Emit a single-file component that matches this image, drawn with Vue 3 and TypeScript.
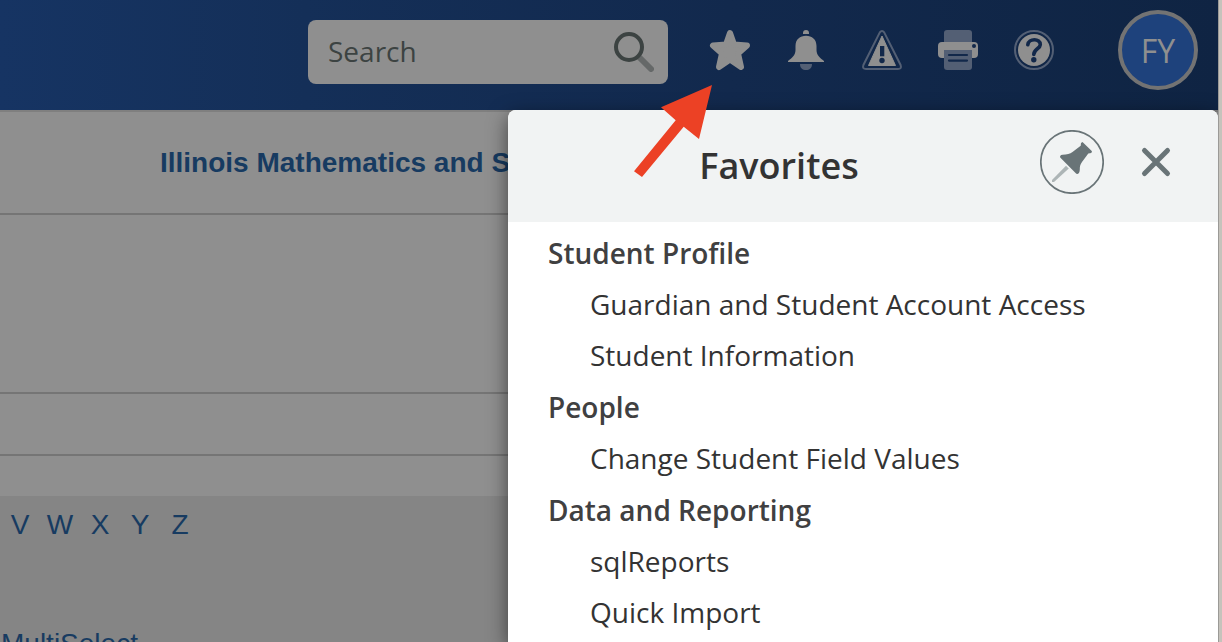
<script setup lang="ts">
import { ref } from 'vue'

interface FavoriteGroup {
  title: string
  links: string[]
}

const query = ref('')
const pinned = ref(false)
const open = ref(true)

const letters: string[] = ['V', 'W', 'X', 'Y', 'Z']

const groups: FavoriteGroup[] = [
  { title: 'Student Profile', links: ['Guardian and Student Account Access', 'Student Information'] },
  { title: 'People', links: ['Change Student Field Values'] },
  { title: 'Data and Reporting', links: ['sqlReports', 'Quick Import'] },
]
</script>

<template>
  <div class="screen">
    <div class="app">
      <header class="topbar">
        <form class="search" role="search" @submit.prevent>
          <input v-model="query" type="text" placeholder="Search" aria-label="Search" />
          <button type="submit" class="bare" aria-label="Run search">
            <svg width="40" height="40" viewBox="0 0 40 40" fill="none">
              <path d="M26 26L37 37" stroke="#656868" stroke-width="6" stroke-linecap="round" />
              <circle cx="15" cy="15" r="13" fill="#8f8f8f" stroke="#3c4342" stroke-width="4" />
            </svg>
          </button>
        </form>
        <nav class="tools" aria-label="Tools">
          <button class="bare" aria-label="Favorites" @click="open = !open">
            <svg width="40" height="40" viewBox="0 0 40 40" class="solid">
              <path d="M20 3L24 14.5L37 15.5L28 23.5L31 37L20 29.5L9 37L12 23.5L3 15.5L16 14.5Z" stroke="#8f8f8f" stroke-width="6" stroke-linejoin="round" />
            </svg>
          </button>
          <button class="bare" aria-label="Notifications">
            <svg width="40" height="40" viewBox="0 0 40 40" class="solid">
              <path d="M17 4V3A3 3 0 0 1 23 3V4Z" />
              <path d="M2 32V31C6 28 9.500 25 9.500 20V16C9.500 9.500 14 5.800 20 5.800S30.500 9.500 30.500 16V20C30.500 25 34 28 38 31V32Z" />
              <path d="M14 34H26C26 38 23.500 40 20 40S14 38 14 34Z" class="soft" />
            </svg>
          </button>
          <button class="bare" aria-label="Alerts">
            <svg width="40" height="40" viewBox="0 0 40 40" class="solid">
              <path d="M17.800 2.400Q20 -0.600 22.200 2.400L38.600 35Q40 39 36 39H4Q0 39 1.400 35Z" fill="none" stroke="#535f74" stroke-width="2" class="line" />
              <path d="M20 6L33.500 35.500H6.500Z" stroke="#8f8f8f" stroke-width="1" stroke-linejoin="round" />
              <path d="M18 16H22.300V26.300H18Z" class="cut" />
              <circle cx="20" cy="30.500" r="2.700" class="cut" />
            </svg>
          </button>
          <button class="bare" aria-label="Print">
            <svg width="40" height="40" viewBox="0 0 40 40" class="solid">
              <rect x="6" y="0" width="28" height="16" rx="3" class="soft" />
              <rect x="0" y="12" width="40" height="16" rx="4" />
              <path d="M6 20H34V37Q34 40 31 40H9Q6 40 6 37Z" class="soft" />
              <circle cx="36" cy="16" r="2" class="cut" />
              <path d="M11 25H29M11 30.600H29" stroke="#12284a" stroke-width="2.200" stroke-linecap="round" />
            </svg>
          </button>
          <button class="bare" aria-label="Help">
            <svg width="40" height="40" viewBox="0 0 40 40" class="solid">
              <circle cx="20" cy="20" r="19" stroke="#535f74" stroke-width="2" class="line" />
              <circle cx="20" cy="20" r="16" />
              <path d="M13.800 14.800C14.500 8 26.500 8.200 26.300 14.600C26.200 18.800 19.800 19 19.800 24.500" stroke="#12284a" stroke-width="3.600" stroke-linecap="round" class="line" />
              <circle cx="19.800" cy="29.700" r="2.700" class="cut" />
            </svg>
          </button>
        </nav>
        <button class="avatar" aria-label="Account FY">FY</button>
      </header>

      <main class="page">
        <h1 class="school">Illinois Mathematics and S</h1>
        <div class="row tall"></div>
        <div class="row"></div>
        <div class="row last"></div>
        <section class="browse">
          <nav class="letters" aria-label="Browse by letter">
            <a v-for="letter in letters" :key="letter" href="#">{{ letter }}</a>
          </nav>
          <a class="multi" href="#">MultiSelect</a>
        </section>
      </main>

      <aside v-if="open" class="panel" aria-label="Favorites">
        <div class="panel-head">
          <h2>Favorites</h2>
          <button class="round" aria-label="Pin" :aria-pressed="pinned" @click="pinned = !pinned">
            <svg width="64" height="64" viewBox="0 0 64 64">
              <circle cx="32" cy="32" r="31.200" fill="none" stroke="#697477" stroke-width="1.700" />
              <path d="M42.500 12L52 21.300L51.300 23L48.300 23.500L42 32C40 34.500 39.800 37 39.800 39.500C39.700 42 39 43.500 37.500 44L36.300 43.700L20.200 27.500C19.700 26 20.500 24.900 22.500 24.700C27 24.700 30 24 32.500 22L40.700 15.700L41 13Z" fill="#697477" />
              <path d="M26 35.800L28.800 38.600L14 52L12 52L12 50Z" fill="#adb5b6" />
            </svg>
          </button>
          <button class="round" aria-label="Close" @click="open = false">
            <svg width="64" height="64" viewBox="0 0 64 64">
              <path d="M20.500 20.500L43.500 43.500M43.500 20.500L20.500 43.500" stroke="#697477" stroke-width="5" stroke-linecap="round" />
            </svg>
          </button>
        </div>
        <div class="groups">
          <section v-for="group in groups" :key="group.title">
            <h3>{{ group.title }}</h3>
            <ul>
              <li v-for="link in group.links" :key="link"><a href="#">{{ link }}</a></li>
            </ul>
          </section>
        </div>
      </aside>

      <svg class="pointer" width="78" height="92" viewBox="0 0 78 92" aria-hidden="true">
        <path d="M78 0L27 22.300L41.700 35.300L0 86.300L8 92L49.700 41.700L65 54Z" fill="#ec4125" />
      </svg>
    </div>
    <div class="edge"></div>
  </div>
</template>

<style>
body {
  margin: 0;
}
</style>

<style scoped>
.screen {
  display: flex;
  height: 100vh;
  overflow: hidden;
  font-family: "Open Sans", "Noto Sans", sans-serif;
  font-size: 28px;
}
.app {
  position: relative;
  display: flex;
  flex: 1;
  flex-direction: column;
  min-width: 0;
  overflow: hidden;
}
.edge {
  flex: none;
  box-sizing: border-box;
  width: 4px;
  border-left: 1px solid #9b9a97;
  background: #c6c3bc;
}
h1,
h2,
h3,
ul {
  margin: 0;
  padding: 0;
}
svg {
  display: block;
}
button {
  padding: 0;
  border: 0;
  background: none;
  font-family: inherit;
  cursor: pointer;
}
a {
  text-decoration: none;
}
.solid {
  fill: #8f8f8f;
  overflow: visible;
}
.soft {
  fill: #535f74;
}
.cut {
  fill: #12284a;
}
.line {
  fill: none;
}
.topbar {
  display: flex;
  flex: none;
  box-sizing: border-box;
  justify-content: flex-end;
  height: 110px;
  padding: 10px 20px;
  background: linear-gradient(90deg, #163463 0%, #142f58 25%, #12294d 60%, #0f2443 100%);
}
.search {
  display: flex;
  flex: 0 1 360px;
  box-sizing: border-box;
  align-items: center;
  min-width: 0;
  height: 64px;
  margin: 10px 42px 0 0;
  padding: 0 14px 0 20px;
  border-radius: 8px;
  background: #8f8f8f;
}
.search input {
  flex: 1;
  width: 0;
  min-width: 0;
  padding: 0 0 2px;
  border: 0;
  outline: 0;
  background: none;
  color: #3c4342;
  font: inherit;
}
.search input::placeholder {
  color: #3c4342;
  opacity: 1;
}
.tools {
  display: flex;
  gap: 36px;
  height: 80px;
  align-items: center;
}
.avatar {
  box-sizing: border-box;
  width: 80px;
  height: 80px;
  margin-left: 64px;
  border: 4px solid #737373;
  border-radius: 50%;
  background: #1e427c;
  color: #8f8f8f;
  font-size: 32px;
}
.page {
  flex: 1;
  background: #8f8f8f;
  border-top: 2px solid #7f7f7f;
  font-family: "Liberation Sans", Arial, sans-serif;
}
.page a,
.school {
  color: #173b61;
}
.school {
  padding: 0 20px 0 160px;
  border-bottom: 2px solid #757575;
  font-size: 28px;
  line-height: 101px;
  white-space: nowrap;
}
.row {
  height: 60px;
  border-bottom: 2px solid #757575;
}
.row.tall {
  height: 177px;
}
.row.last {
  height: 40px;
  border-bottom: 0;
}
.browse {
  height: 100%;
  background: #858585;
}
.letters {
  display: grid;
  grid-template-columns: repeat(5, 40px);
  padding: 12px 0 70px;
  line-height: 34px;
  text-align: center;
}
.multi {
  display: block;
  padding-left: 1px;
  line-height: 64px;
}
.panel {
  position: absolute;
  top: 110px;
  right: 0;
  bottom: 0;
  width: 710px;
  border-radius: 8px 8px 0 0;
  background: #fff;
  box-shadow: 0 6px 20px rgba(0, 0, 0, 0.55);
  color: #333;
}
.panel-head {
  display: flex;
  box-sizing: border-box;
  gap: 20px;
  height: 112px;
  padding: 20px 30px;
  border-radius: 8px 8px 0 0;
  background: #f1f3f3;
}
h2 {
  flex: 1;
  font-size: 36px;
  font-weight: 600;
  line-height: 72px;
  text-align: center;
}
.round {
  width: 64px;
  height: 64px;
  border-radius: 50%;
}
.groups {
  display: grid;
  gap: 1px;
  padding: 6px 40px;
  line-height: 51px;
}
h3 {
  color: #404041;
  font-size: 28px;
  font-weight: 600;
}
ul {
  padding-left: 42px;
  list-style: none;
}
li a {
  display: block;
  color: #333;
}
.pointer {
  position: absolute;
  top: 85px;
  right: 506px;
}
</style>
